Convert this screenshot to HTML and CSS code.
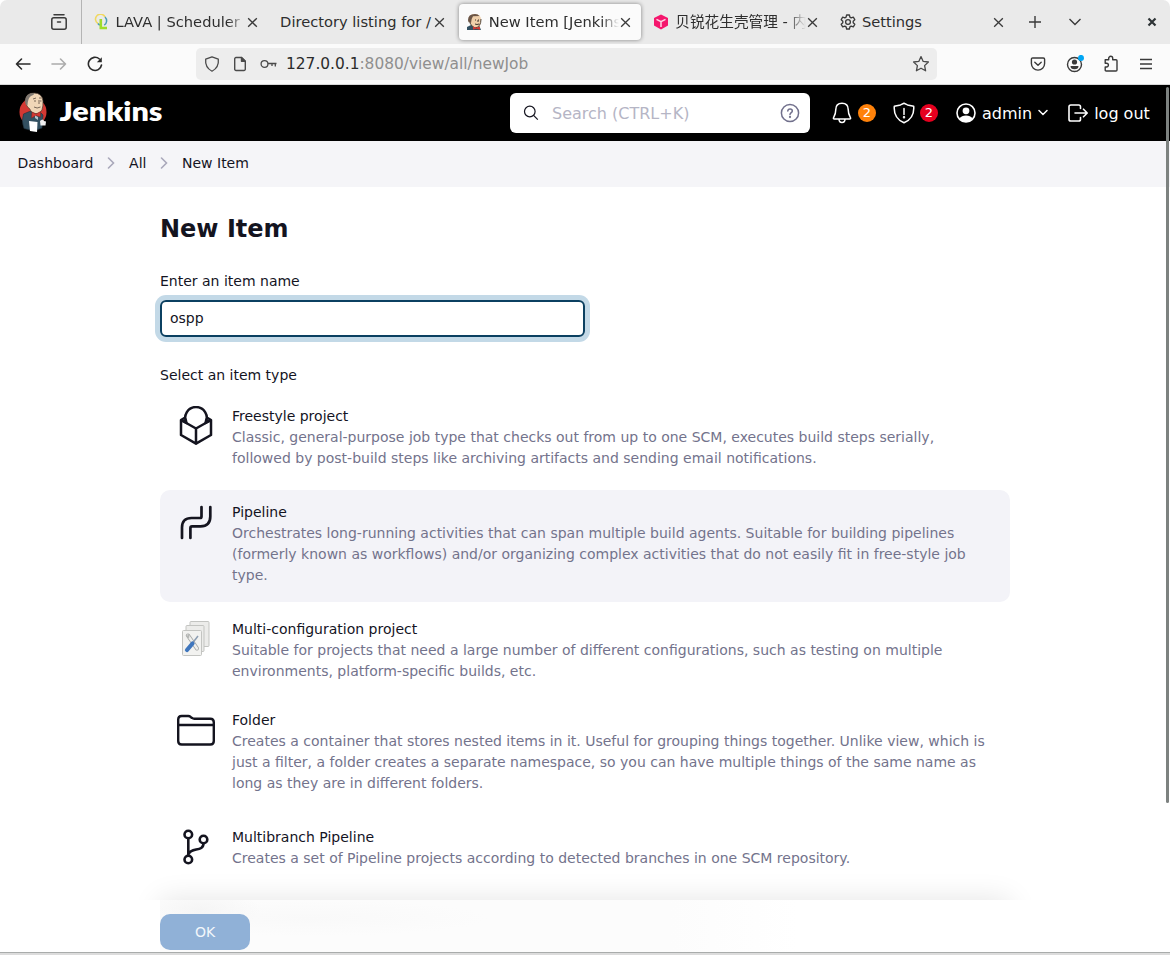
FILE: index.html
```html
<!DOCTYPE html>
<html lang="en">
<head>
<meta charset="utf-8">
<title>New Item [Jenkins]</title>
<link rel="stylesheet" href="styles.css">
</head>
<body>
<svg class="defs" width="0" height="0">
  <symbol id="close" viewBox="0 0 12 12"><path d="M2 2l8 8M10 2l-8 8" fill="none" stroke="currentColor" stroke-width="1.2"/></symbol>
</svg>
<div class="window">
  <div class="tabstrip">
    <div class="view-btn">
      <svg width="18" height="18" viewBox="0 0 18 18" fill="none" stroke="#3a3a3a" stroke-width="1.5" stroke-linecap="round"><path d="M4 1.8h10"/><rect x="1.8" y="4.8" width="14.4" height="11.4" rx="2"/><path d="M7.5 9h3"/></svg>
    </div>
    <div class="tab"><div class="tab-in">
      <svg class="fav" width="16" height="16" viewBox="0 0 16 16" fill="none"><path d="M4 9.5A5 5 0 1 1 11 3" stroke="#f0d860" stroke-width="1.6"/><path d="M11 3a5.2 5.2 0 0 1-.8 8.2M4 9.5c.6.9 1.200 1.300 2 1.500" stroke="#4a9db5" stroke-width="1.500"/><path d="M6.800 5v9H13" stroke="#9fdc2b" stroke-width="2.600"/></svg>
      <span class="label fade">LAVA | Scheduler</span><svg class="x"><use href="#close"/></svg>
    </div></div>
    <div class="tab"><div class="tab-in">
      <span class="label">Directory listing for /</span><svg class="x"><use href="#close"/></svg>
    </div></div>
    <div class="tab"><div class="tab-in active">
      <svg class="fav" width="16" height="16" viewBox="0 0 16 16"><path d="M0 16v-3l4-2h8l2 5z" fill="#335061"/><path d="M2 5Q2 0 8 0q6 0 6 6 0 8-6 8Q3 12 2 5z" fill="#efcfaa"/><path d="M1 6Q1 0 8 0q3 0 4.500 2L6 2.200Q4 5 4 9 1 9 1 6z" fill="#6b5546"/><path d="M14 5q0 8-6 9-4-2-5-5" fill="none" stroke="#40352c" stroke-width=".9"/><path d="M8 6h1m2 0h1M8 10q2 1 4 0M11 6v2" stroke="#40352c" fill="none"/><path d="M6 12.500l3 1.200 4-1.200v3.300l-4-1-3 1z" fill="#d33833"/></svg>
      <span class="label fade">New Item [Jenkins]</span><svg class="x"><use href="#close"/></svg>
    </div></div>
    <div class="tab"><div class="tab-in">
      <svg class="fav" width="16" height="16" viewBox="0 0 16 16"><path d="M8 .5l7 3.600v7.500L8 15.500l-7-3.900V4.100z" fill="#f5166d"/><path d="M3.500 5.300L8 7.700l4.500-2.400M8 7.700V13" fill="none" stroke="#ffd5e4" stroke-width="1.500"/></svg>
      <span class="label fade cjk">贝锐花生壳管理 - 内网</span><svg class="x"><use href="#close"/></svg>
    </div></div>
    <div class="tab"><div class="tab-in">
      <svg class="fav" width="16" height="16" viewBox="0 0 16 16" fill="none" stroke="#3a3a3a" stroke-width="1.300" stroke-linejoin="round"><path d="M6.600 1h2.800l.5 2.100 1.300.8 2.100-.7 1.500 2.500-1.600 1.500v1.600l1.600 1.500-1.500 2.500-2.100-.7-1.300.8-.5 2.100H6.600l-.5-2.100-1.300-.8-2.100.7-1.500-2.500 1.600-1.500V7.200L1.200 5.700l1.500-2.500 2.100.7 1.300-.8z"/><circle cx="8" cy="8" r="2.400"/></svg>
      <span class="label">Settings</span><svg class="x"><use href="#close"/></svg>
    </div></div>
    <svg class="plus" width="14" height="14" viewBox="0 0 14 14"><path d="M7 1v12M1 7h12" stroke="#3a3a3a" stroke-width="1.400"/></svg>
    <svg class="down" width="14" height="14" viewBox="0 0 14 14"><path d="M1.500 4L7 9.500 12.500 4" fill="none" stroke="#3a3a3a" stroke-width="1.400"/></svg>
    <svg class="win-x" width="10" height="10" viewBox="0 0 10 10"><path d="M1.500 1.500l7 7m0-7l-7 7" stroke="#2e3436" stroke-width="2.200"/></svg>
  </div>

  <div class="toolbar">
    <div class="nav">
      <svg width="16" height="16" viewBox="0 0 16 16" fill="none" stroke="#2b2b2b" stroke-width="1.600" stroke-linecap="round" stroke-linejoin="round"><path d="M15 8H1.500M6.500 3l-5 5 5 5"/></svg>
      <svg width="16" height="16" viewBox="0 0 16 16" fill="none" stroke="#acacac" stroke-width="1.600" stroke-linecap="round" stroke-linejoin="round"><path d="M1 8h13.500M9.500 3l5 5-5 5"/></svg>
      <svg width="16" height="16" viewBox="0 0 16 16" fill="none" stroke="#2b2b2b" stroke-width="1.600" stroke-linecap="round"><path d="M14.500 9A6.600 6.600 0 1 1 12.400 3"/><path d="M14.800 1.300v5H9.800z" fill="#2b2b2b" stroke="none"/></svg>
    </div>
    <div class="urlbar">
      <svg width="16" height="16" viewBox="0 0 16 16" fill="none" stroke="#4a4a4a" stroke-width="1.300" stroke-linejoin="round"><path d="M8 .8l6.300 2.300c.6 5.400-1.200 9.400-6.300 12.100C2.900 12.500 1.100 8.500 1.700 3.100z"/></svg>
      <svg width="16" height="16" viewBox="0 0 16 16" fill="none" stroke="#4a4a4a" stroke-width="1.400" stroke-linejoin="round"><path d="M9.500 1.500H4A1.300 1.300 0 0 0 2.700 2.800v10.400A1.300 1.300 0 0 0 4 14.500h8a1.300 1.300 0 0 0 1.300-1.300V5.300z"/><path d="M9.500 1.500v3.800h3.800z" fill="#4a4a4a"/></svg>
      <svg width="17" height="16" viewBox="0 0 17 16" fill="none" stroke="#4a4a4a" stroke-width="1.300"><circle cx="4.500" cy="8" r="3.400"/><path d="M8 7.500h8.500M12 7.500v2.600M15.300 7.500v3"/></svg>
      <span class="url">127.0.0.1<span class="path">:8080/view/all/newJob</span></span>
      <svg width="18" height="18" viewBox="0 0 18 18" fill="none" stroke="#4a4a4a" stroke-width="1.300" stroke-linejoin="round"><path d="M9 1.600l2.200 4.800 5.200.6-3.800 3.600 1 5.200L9 13.200l-4.600 2.600 1-5.200L1.600 7l5.200-.6z"/></svg>
    </div>
    <div class="tools">
      <svg width="16" height="16" viewBox="0 0 16 16" fill="none" stroke="#3a3a3a" stroke-width="1.400" stroke-linecap="round" stroke-linejoin="round"><path d="M2.700 2h10.600c.8 0 1.300.5 1.300 1.300v4.200a6.600 6.600 0 0 1-13.200 0V3.300C1.400 2.500 1.900 2 2.700 2zM4.800 6.300L8 9.300l3.200-3"/></svg>
      <svg width="18" height="18" viewBox="0 0 18 18"><circle cx="8.500" cy="9.500" r="7" fill="none" stroke="#3a3a3a" stroke-width="1.400"/><circle cx="8.500" cy="7" r="2.600" fill="#3a3a3a"/><path d="M4.500 11h8q0 3.300-4 3.300t-4-3.300z" fill="#3a3a3a"/><circle cx="15" cy="2.900" r="3" fill="#00a6f4"/></svg>
      <svg width="16" height="18" viewBox="0 0 16 18" fill="none" stroke="#3a3a3a" stroke-width="1.400" stroke-linejoin="round"><path d="M2.200 4.700h3.500V3.300a2 2 0 0 1 4 0v1.400H13q1 0 1 1V15q0 1-1 1H3.200q-1 0-1-1v-3h1.300a1.900 1.900 0 0 0 0-3.800H2.200z"/></svg>
      <svg width="14" height="14" viewBox="0 0 14 14"><path d="M1 2.500h12M1 7h12M1 11.500h12" stroke="#3a3a3a" stroke-width="1.300"/></svg>
    </div>
  </div>

  <header class="header">
    <svg class="butler" width="30" height="42" viewBox="0 0 30 42"><ellipse cx="15" cy="20" rx="13.500" ry="14" fill="#d33833"/><path d="M5.500 22l6-2.500h10L25 23l-1 13-8 3-10-2.500Q3 29 5.500 22z" fill="#335061" stroke="#1d2f3a" stroke-width=".6"/><path d="M7.500 8Q8 1 16 1q8 0 9 8 .5 11-5 12.500-6 1-8.500-5-3-1-4-8.500z" fill="#f0d6b7" stroke="#4a3b30" stroke-width=".7"/><path d="M7 10Q7 1 16 1q1 1.500-3 3-3 1.500-3.500 9L8 13z" fill="#7f7871"/><path d="M15 7l3-1m3 0h2.500M21 8v4m-5-3h2m4 0h1.500M16 15q3 2 6.500 0" fill="none" stroke="#5b4b40" stroke-width=".8"/><path d="M14 20l4 2 4.500-2.500V25L18 23.500 13.500 26z" fill="#d33833" stroke="#81201c" stroke-width=".5"/><path d="M17 23.500l3 1.500v3l-3-2z" fill="#b8c5ce"/><path d="M11 29l8.500 1-.5 10-7-1z" fill="#fff"/><path d="M22 29q3-3 4 0l2 .5-.5 4h-5z" fill="#eee"/></svg>
    <svg class="wordmark" width="108" height="36"><text x="1.500" y="26" textLength="103" lengthAdjust="spacingAndGlyphs">Jenkins</text></svg>
    <div class="search">
      <svg width="16" height="16" viewBox="0 0 16 16" fill="none" stroke="#14141f" stroke-width="1.200"><circle cx="6.800" cy="6.500" r="5.300"/><path d="M10.600 10.300l4.200 4.300"/></svg>
      <span>Search (CTRL+K)</span>
      <svg width="20" height="20" viewBox="0 0 20 20" fill="none" stroke="#71708c" stroke-width="1.500" stroke-linecap="round"><circle cx="10" cy="10" r="8.600"/><path d="M7.800 8.100c.1-3 4.500-2.800 4.500-.2 0 1.700-2.200 1.700-2.300 3.600"/><circle cx="10" cy="14" r=".4"/></svg>
    </div>
    <div class="actions">
      <svg width="20" height="22" viewBox="0 0 20 22" fill="none" stroke="#fff" stroke-width="1.500" stroke-linejoin="round"><path d="M10 1.300c4 0 6.200 2.700 6.200 6.300 0 4.600 1.500 6.800 2.300 8.200.3.700 0 1.200-.8 1.200H2.300c-.8 0-1.100-.5-.8-1.200.8-1.400 2.300-3.600 2.300-8.200 0-3.600 2.200-6.300 6.200-6.300zM7 17c0 4.600 6 4.600 6 0"/></svg>
      <span class="badge orange">2</span>
      <svg class="shield" width="22" height="22" viewBox="0 0 22 22" fill="none" stroke="#fff" stroke-width="1.500" stroke-linejoin="round" stroke-linecap="round"><path d="M11 1.300l3.500 1.600 6.200 1.300c.7 8.300-2.700 13.500-9.700 16.600C4 17.700.6 12.500 1.300 4.200l6.200-1.300zM11 6.500v6"/><circle cx="11" cy="15.300" r=".5"/></svg>
      <span class="badge red">2</span>
      <svg class="user" width="20" height="20" viewBox="0 0 20 20"><circle cx="10" cy="10" r="9" fill="none" stroke="#fff" stroke-width="1.600"/><circle cx="10" cy="7.800" r="3.400" fill="#fff"/><path d="M3.500 15.800q2-3.300 6.500-3.300t6.500 3.300Q14 19 10 19t-6.500-3.200z" fill="#fff"/></svg>
      <span class="admin">admin</span>
      <svg class="chev" width="10" height="8" viewBox="0 0 10 8"><path d="M1 1.500l4 4 4-4" fill="none" stroke="#fff" stroke-width="1.500" stroke-linecap="round"/></svg>
      <svg class="exit" width="20" height="18" viewBox="0 0 20 18" fill="none" stroke="#fff" stroke-width="1.600" stroke-linecap="round" stroke-linejoin="round"><path d="M12.500 4.500V2.800a1.800 1.800 0 0 0-1.800-1.800H2.800A1.800 1.800 0 0 0 1 2.800v12.400A1.800 1.800 0 0 0 2.800 17h7.900a1.800 1.800 0 0 0 1.800-1.800v-1.700M7 9h12M15.500 5.200L19.200 9l-3.700 3.800"/></svg>
      <span class="logout">log out</span>
    </div>
  </header>

  <nav class="crumbs">
    <span>Dashboard</span>
    <svg width="8" height="12" viewBox="0 0 8 12"><path d="M1.500 1l5 5-5 5" fill="none" stroke="#a9a8ba" stroke-width="1.600" stroke-linecap="round"/></svg>
    <span>All</span>
    <svg width="8" height="12" viewBox="0 0 8 12"><path d="M1.500 1l5 5-5 5" fill="none" stroke="#a9a8ba" stroke-width="1.600" stroke-linecap="round"/></svg>
    <span>New Item</span>
  </nav>

  <main class="main">
    <h1>New Item</h1>
    <div class="field-label">Enter an item name</div>
    <div class="input">ospp</div>
    <div class="field-label type">Select an item type</div>
    <div class="items">
      <div class="item">
        <svg width="40" height="40" viewBox="0 0 40 40" fill="none" stroke="#14141f" stroke-width="2.500" stroke-linejoin="round"><path d="M9.200 11.500L5 14v15l15 8.700L35 29V14l-4.200-2.500M5 14l15 8.500L35 14M20 22.500v15"/><path d="M10.500 17A10.800 10.800 0 1 1 29.500 17M5 14l5.500 3-1.300-5.500M35 14l-5.500 3 1.300-5.500"/></svg>
        <div><h2>Freestyle project</h2><p>Classic, general-purpose job type that checks out from up to one SCM, executes build steps serially, followed by post-build steps like archiving artifacts and sending email notifications.</p></div>
      </div>
      <div class="item selected">
        <svg width="40" height="40" viewBox="0 0 40 40" fill="none" stroke="#14141f" stroke-width="2.700" stroke-linecap="round" stroke-linejoin="round"><path d="M25.500 5v9.500q0 1.500-1.500 1.500H15.500Q6 16 6 25.500V36M34.300 5v9.500q0 9.800-9.800 9.800H16q-1.600 0-1.600 1.600V36"/></svg>
        <div><h2>Pipeline</h2><p>Orchestrates long-running activities that can span multiple build agents. Suitable for building pipelines (formerly known as workflows) and/or organizing complex activities that do not easily fit in free-style job type.</p></div>
      </div>
      <div class="item compact">
        <svg width="40" height="40" viewBox="0 0 40 40"><g fill="#ececea" stroke="#c3c4c1"><rect x="14" y="2.500" width="19" height="25" rx="1"/><rect x="10" y="6.500" width="18" height="26" rx="1"/><rect x="6.500" y="11.500" width="19" height="25" rx="1" fill="#f2f2f0"/></g><path d="M12 16.500l9 13" stroke="#a5a7a5" stroke-width="4" stroke-linecap="round"/><path d="M12 16.500l9 13" stroke="#f0f0ee" stroke-width="2.400" stroke-linecap="round"/><path d="M10 16l2.500 2 .5-3" fill="none" stroke="#b5b7b5" stroke-width="1.500"/><path d="M22 17l-5 6.500" stroke="#8b9db2" stroke-width="1.500"/><path d="M16.500 24.500L11 31" stroke="#3f76bd" stroke-width="4.200" stroke-linecap="round"/></svg>
        <div><h2>Multi-configuration project</h2><p>Suitable for projects that need a large number of different configurations, such as testing on multiple environments, platform-specific builds, etc.</p></div>
      </div>
      <div class="item">
        <svg width="40" height="40" viewBox="0 0 40 40" fill="none" stroke="#14141f" stroke-width="2.400" stroke-linejoin="round"><path d="M2.200 15V9.500Q2.200 6 5.700 6h6.500q1.400 0 2.400.9l1.400 1q1 .8 2.400.8h15.900q3.500 0 3.500 3.500v2.800M2.200 15h35.600v16q0 3.500-3.500 3.500H5.700q-3.500 0-3.500-3.500z"/></svg>
        <div><h2>Folder</h2><p>Creates a container that stores nested items in it. Useful for grouping things together. Unlike view, which is just a filter, a folder creates a separate namespace, so you can have multiple things of the same name as long as they are in different folders.</p></div>
      </div>
      <div class="item">
        <svg width="40" height="40" viewBox="0 0 40 40" fill="none" stroke="#14141f" stroke-width="2.600"><circle cx="12.300" cy="7.500" r="3.800"/><circle cx="12.300" cy="32.500" r="3.800"/><circle cx="27.500" cy="12.500" r="3.800"/><path d="M12.300 11.300v17.400M27.500 16.300c0 9-12.500 3.700-14.800 10.700"/></svg>
        <div><h2>Multibranch Pipeline</h2><p>Creates a set of Pipeline projects according to detected branches in one SCM repository.</p></div>
      </div>
    </div>
    <div class="footer">
      <div class="footer-shadow"></div>
      <button class="ok">OK</button>
    </div>
  </main>
  <div class="bottom-edge"></div>
  <div class="scrollbar"></div>
</div>
</body>
</html>
```

FILE: styles.css
```css
* { box-sizing: border-box; }
body { margin: 0; font-family: "DejaVu Sans", "Noto Sans CJK SC", sans-serif; background: #fff; }
svg { flex: none; display: block; }
.defs { position: absolute; }
.window { position: relative; width: 1170px; height: 955px; display: flex; flex-direction: column; overflow: hidden; }

/* Browser tabs */
.tabstrip { height: 44px; flex: none; background: #eaeaea; display: flex; align-items: center; color: #2e2e2e; font-size: 14.67px; border-radius: 7px 7px 0 0; }
.view-btn { width: 82px; height: 44px; padding-left: 50px; display: flex; align-items: center; border-right: 1px solid #b4b4b4; margin-right: 1.500px; }
.tab { width: 186.600px; height: 44px; padding: 4px 2px; flex: none; }
.tab-in { height: 36px; border-radius: 4px; padding: 0 9px 0 8px; display: flex; align-items: center; }
.tab-in.active { background: #fbfbfb; box-shadow: 0 0 4px rgba(0,0,0,.45); }
.fav { margin-right: 6px; }
.label { flex: 1; min-width: 0; white-space: nowrap; overflow: hidden; line-height: 22px; }
.fade { -webkit-mask-image: linear-gradient(to left, transparent, #000 18px); mask-image: linear-gradient(to left, transparent, #000 18px); }
.cjk { font-family: "DejaVu Sans", "Noto Sans CJK SC", sans-serif; }
.x { width: 13px; height: 13px; color: #3a3a3a; }
.plus { margin-left: 12px; }
.down { margin-left: 26px; }
.win-x { margin-left: 65px; }

/* Address row */
.toolbar { height: 41px; flex: none; background: #fbfbfb; border-bottom: 1px solid #d8d8d8; display: flex; align-items: center; }
.nav { width: 196px; padding-left: 15px; display: flex; gap: 20px; }
.urlbar { width: 741px; height: 32px; border-radius: 5px; background: #ededed; display: flex; align-items: center; padding: 0 7px 0 8px; gap: 12px; }
.url { flex: 1; font-size: 15.4px; color: #2b2b2b; margin-left: -3px; }
.path { color: #8f8f8f; }
.tools { flex: 1; display: flex; align-items: center; padding: 0 17px 0 93px; justify-content: space-between; }

/* Application header */
.header { height: 56px; flex: none; background: #000; color: #fff; display: flex; align-items: center; padding-left: 18px; font-size: 16px; }
.wordmark { margin-left: 10px; margin-right: 344px; }
.wordmark text { font: 800 27px Lato, sans-serif; fill: #fff; }
.search { width: 300px; height: 40px; border-radius: 6px; background: #fff; display: flex; align-items: center; padding: 0 10px 0 13px; color: #b5b5c5; }
.search span { flex: 1; margin-left: 13px; }
.actions { display: flex; align-items: center; margin-left: 22px; }
.badge { width: 18px; height: 18px; border-radius: 50%; font-size: 13px; line-height: 18px; text-align: center; margin-left: 6px; }
.orange { background: #ff820a; }
.red { background: #e6001f; margin-left: 5px; }
.shield { margin-left: 17px; }
.user { margin-left: 18px; }
.admin { margin-left: 6px; }
.chev { margin-left: 6px; }
.exit { margin-left: 20px; }
.logout { margin-left: 6px; }

.crumbs { height: 46px; flex: none; background: #f5f5f8; color: #14141f; font-size: 14px; display: flex; align-items: center; padding: 0 0 2px 17.500px; gap: 13.800px; }

/* New item form */
.main { position: relative; flex: 1; min-height: 0; padding: 28px 160px 0; width: 1170px; color: #14141f; font-size: 14px; }
h1 { margin: 0; font-size: 24px; line-height: 28px; font-weight: 700; }
.field-label { margin-top: 28px; line-height: 21px; }
.input { margin-top: 8px; width: 425px; height: 37px; border: 2px solid #0b4061; border-radius: 6px; box-shadow: 0 0 0 5px #c3d9e7; padding-left: 8px; line-height: 33px; }
.field-label.type { margin-top: 28px; }
.items { margin-top: 8px; display: flex; flex-direction: column; gap: 5px; }
.item { display: flex; gap: 16px; padding: 12px 20px 16px 16px; border-radius: 10px; line-height: 21px; }
.item.selected { background: #f3f3f8; }
.item.compact { padding-bottom: 11px; }
.item h2 { margin: 0; font-size: 14px; font-weight: 400; line-height: 21px; }
.item p { margin: 0; color: #73738c; }

/* Pinned action bar over the list */
.footer { position: absolute; left: 160px; right: 160px; bottom: 0; height: 52px; padding-top: 14px; background: radial-gradient(ellipse 60px 22px at 40px 10px, #f5f5f5, transparent), radial-gradient(ellipse 180px 18px at 150px 18px, #f9f9f9, transparent), linear-gradient(90deg, #fcfcfc 60%, #fff 75%); }
.footer-shadow { position: absolute; left: -30px; right: -30px; bottom: 100%; height: 30px; overflow: hidden; }
.footer-shadow::after { content: ""; position: absolute; top: 30px; left: 30px; right: 30px; height: 52px; box-shadow: 0 0 30px rgba(0,0,0,.11); }
.ok { display: block; width: 90px; height: 36px; border: 0; border-radius: 10px; background: #90b1d7; color: #f3f7fb; font: 14px "DejaVu Sans", sans-serif; }

.bottom-edge { height: 3px; flex: none; background: #dcdcdc; border-top: 1px solid #a9acab; }
.scrollbar { position: absolute; right: 1px; top: 87px; width: 3px; height: 716px; border-radius: 2px; background: #7d8280; }
```
